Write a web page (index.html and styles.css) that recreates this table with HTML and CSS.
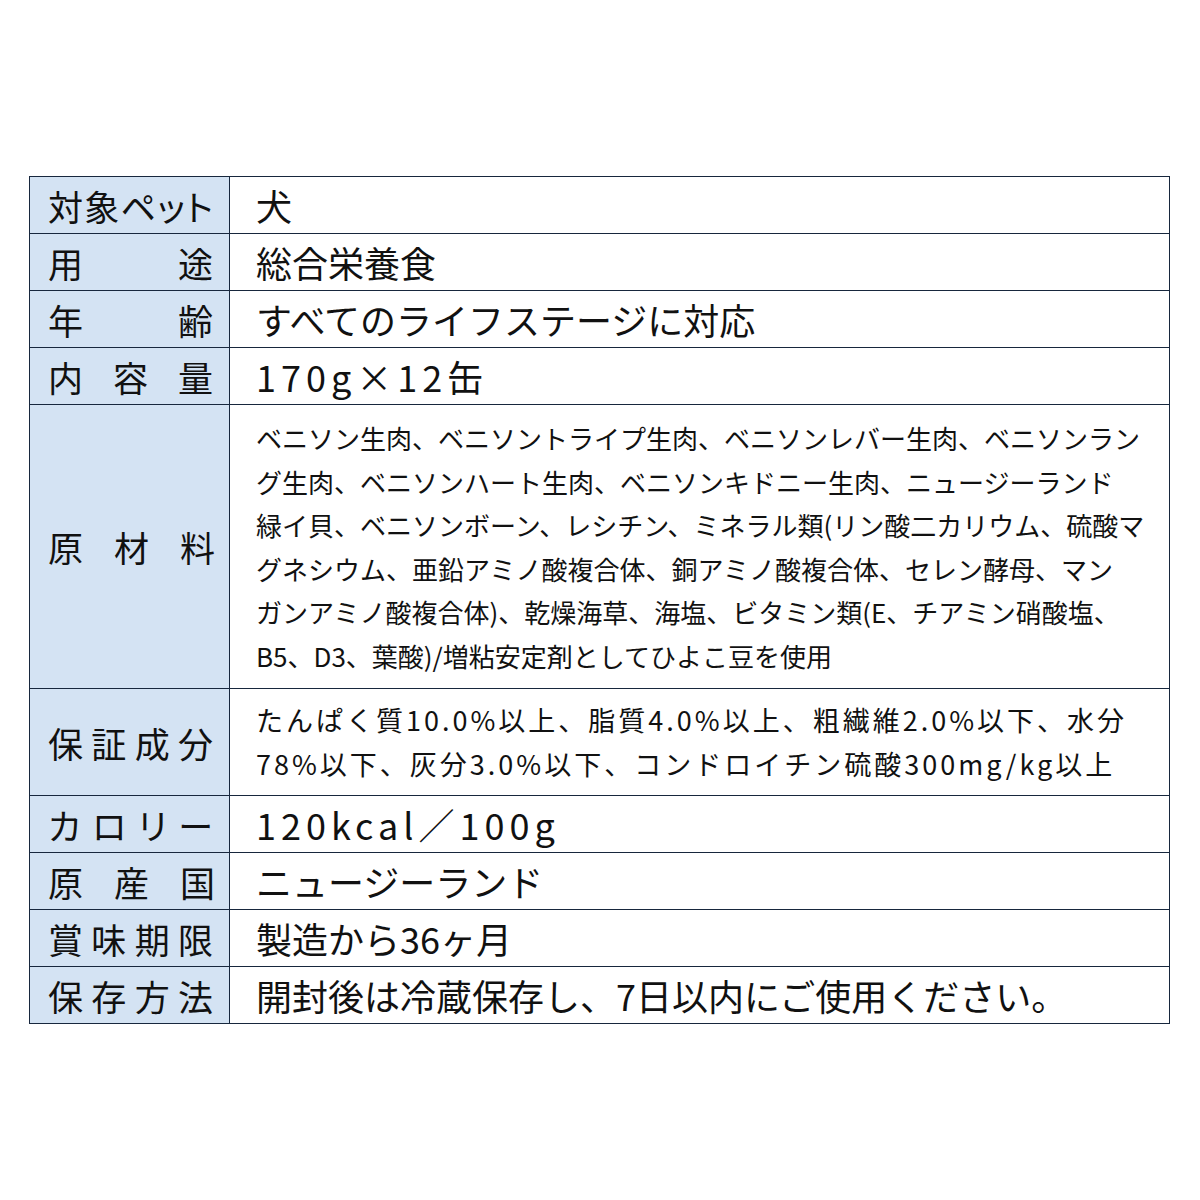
FILE: index.html
```html
<!DOCTYPE html>
<html lang="ja">
<head>
<meta charset="utf-8">
<link rel="stylesheet" href="styles.css">
</head>
<body>
<div class="page">
<table class="spec">
<tr class="r"><th>対象ペット</th><td>犬</td></tr>
<tr class="r"><th>用途</th><td>総合栄養食</td></tr>
<tr class="r"><th>年齢</th><td>すべてのライフステージに対応</td></tr>
<tr class="r"><th>内容量</th><td class="sp">170g×12缶</td></tr>
<tr class="ing"><th class="wide">原材料</th><td class="small">ベニソン生肉、ベニソントライプ生肉、ベニソンレバー生肉、ベニソンラン<br>グ生肉、ベニソンハート生肉、ベニソンキドニー生肉、ニュージーランド<br>緑イ貝、ベニソンボーン、レシチン、ミネラル類(リン酸二カリウム、硫酸マ<br>グネシウム、亜鉛アミノ酸複合体、銅アミノ酸複合体、セレン酵母、マン<br>ガンアミノ酸複合体)、乾燥海草、海塩、ビタミン類(E、チアミン硝酸塩、<br>B5、D3、葉酸)/増粘安定剤としてひよこ豆を使用</td></tr>
<tr class="gua"><th>保証成分</th><td class="mid">たんぱく質10.0%以上、脂質4.0%以上、粗繊維2.0%以下、水分<br>78%以下、灰分3.0%以下、コンドロイチン硫酸300mg/kg以上</td></tr>
<tr class="r"><th>カロリー</th><td class="sp">120kcal／100g</td></tr>
<tr class="r"><th class="wide">原産国</th><td>ニュージーランド</td></tr>
<tr class="r"><th>賞味期限</th><td>製造から36ヶ月</td></tr>
<tr class="r"><th>保存方法</th><td>開封後は冷蔵保存し、7日以内にご使用ください。</td></tr>
</table>
</div>
</body>
</html>
```

FILE: styles.css
```css
html, body {
  margin: 0;
  padding: 0;
  background: #ffffff;
}
.page {
  padding: 176px 0 0 29px;
  font-family: "Noto Sans CJK JP", "Noto Sans", sans-serif;
  color: #111111;
}
.spec {
  border-collapse: collapse;
  width: 1141px;
  table-layout: fixed;
}
.spec th, .spec td {
  border: 1.5px solid #17273d;
  padding: 0;
  line-height: 1;
}
.spec th {
  width: 200px;
  box-sizing: border-box;
  background: #d4e3f3;
  font-weight: 400;
  font-size: 35px;
  padding: 0 16px 0 18px;
  text-align: justify;
  text-align-last: justify;
  white-space: nowrap;
  font-feature-settings: "palt";
}
.spec th.wide {
  padding: 0 14px 0 18px;
}
.spec td {
  font-size: 36px;
  padding-left: 26px;
  white-space: nowrap;
}
.spec td.sp {
  letter-spacing: 5px;
}
.r { height: 57px; }
.ing { height: 284px; }
.gua { height: 107px; }
.spec td.small {
  font-size: 26px;
  line-height: 43.5px;
}
.spec td.mid {
  font-size: 27px;
  line-height: 44px;
  letter-spacing: 3px;
}
```
